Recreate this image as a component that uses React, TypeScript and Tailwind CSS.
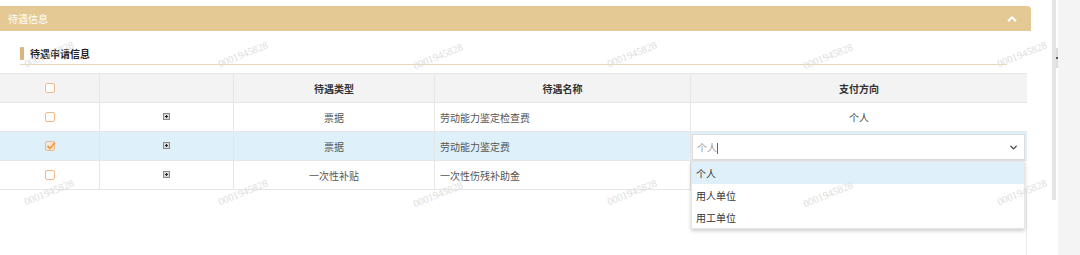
import { ChevronUp, ChevronDown } from 'lucide-react';

interface Row { type: string; name: string; pay: string; checked?: boolean; editing?: boolean }

const rows: Row[] = [
  { type: '票据', name: '劳动能力鉴定检查费', pay: '个人' },
  { type: '票据', name: '劳动能力鉴定费', pay: '个人', checked: true, editing: true },
  { type: '一次性补贴', name: '一次性伤残补助金', pay: '' },
];

const options = ['个人', '用人单位', '用工单位'];

const marks = [
  { x: 23, y: 60 }, { x: 217, y: 60 }, { x: 412, y: 62 }, { x: 606, y: 60 }, { x: 802, y: 62 }, { x: 996, y: 60 },
  { x: 23, y: 198 }, { x: 217, y: 198 }, { x: 412, y: 200 }, { x: 606, y: 198 }, { x: 802, y: 200 }, { x: 996, y: 198 },
];

function Check({ on }: { on?: boolean }){
  return (
    <span className={`relative inline-block w-[10px] h-[10px] rounded-[2px] border ${on ? 'border-[#f0b98a] bg-[#f7e7da]' : 'border-[#f4b888] bg-white'}`}>
      {on && (
        <svg className="absolute left-[0px] top-[-1px]" width="10" height="10" viewBox="0 0 10 10">
          <path d="M1.5 5 L4 7.5 L9 1.5" stroke="#ef9a45" strokeWidth="1.8" fill="none" />
        </svg>
      )}
    </span>
  );
}

function Expand(){
  return (
    <span className="relative inline-block w-[7px] h-[7px] border border-[#8a8a8a] bg-[#d9d9d9]">
      <span className="absolute left-[1px] top-[2px] w-[3px] h-px bg-[#222]" />
      <span className="absolute left-[2px] top-[1px] w-px h-[3px] bg-[#222]" />
    </span>
  );
}

const cell = 'h-[29px] flex items-center border-r border-b border-[#e6e6e6]';

export default function App(){
  return (
    <div className="flex h-[255px] overflow-hidden bg-white text-[10px] font-['Noto_Sans_CJK_SC','Noto_Sans',sans-serif]">
      <div className="relative w-[1052px] pt-[6px]">
        <div className="w-[1031px] h-[25px] bg-[#e4c995] rounded-tr-[4px] flex items-center justify-between pl-[8px] pr-[12px] text-white">
          <span>待遇信息</span>
          <ChevronUp size={14} strokeWidth={3.2} />
        </div>

        <div className="ml-[20px] w-[987px] mt-[15px] h-[19px] border-b border-[#ead7b3] flex items-start">
          <span className="w-[4px] h-[13px] mt-[1px] bg-[#d8b680] rounded-[1px]" />
          <span className="ml-[6px] font-bold text-[#222] leading-[15px]">待遇申请信息</span>
        </div>

        <div className="mt-[8px] w-[1027px] h-[200px] border-r border-[#ececec]">
          <div className="grid grid-cols-[100px_134px_201px_256px_336px] border-t border-[#e6e6e6]">
            <div className={`${cell} justify-center bg-[#f3f3f3]`}><Check /></div>
            <div className={`${cell} bg-[#f3f3f3]`} />
            <div className={`${cell} justify-center bg-[#f3f3f3] font-bold text-[#333]`}>待遇类型</div>
            <div className={`${cell} justify-center bg-[#f3f3f3] font-bold text-[#333]`}>待遇名称</div>
            <div className={`${cell} justify-center bg-[#f3f3f3] font-bold text-[#333] border-r-0`}>支付方向</div>

            {rows.map((r, i) => {
              const bg = r.checked ? 'bg-[#def0fa]' : 'bg-white';
              return [
                <div key={i + 'a'} className={`${cell} ${bg} justify-center`}><Check on={r.checked} /></div>,
                <div key={i + 'b'} className={`${cell} ${bg} justify-center pb-[2px]`}><Expand /></div>,
                <div key={i + 'c'} className={`${cell} ${bg} justify-center text-[#555]`}>{r.type}</div>,
                <div key={i + 'd'} className={`${cell} ${bg} pl-[5px] text-[#555]`}>{r.name}</div>,
                <div key={i + 'e'} className={`${cell} ${bg} justify-center text-[#444] border-r-0 relative`}>
                  {r.editing ? (
                    <>
                      <div className="absolute left-[1px] top-[2px] w-[333px] h-[26px] bg-white border border-[#dcdcdc] flex items-center justify-between pl-[4px] pr-[5px] text-[#999]">
                        <span>个人<span className="inline-block w-px h-[11px] bg-[#666] align-[-2px]" /></span>
                        <ChevronDown size={11} strokeWidth={3} className="text-[#444]" />
                      </div>
                      <div className="absolute left-0 top-[29px] z-10 w-[334px] bg-white shadow-[0_2px_4px_rgba(0,0,0,0.2)] border border-[#e6e6e6]">
                        {options.map((o, j) => (
                          <div key={o} className={`h-[22px] flex items-center pl-[4px] text-[#333] ${j === 0 ? 'bg-[#dff0fa]' : ''}`}>{o}</div>
                        ))}
                      </div>
                    </>
                  ) : r.pay}
                </div>,
              ];
            })}
          </div>
        </div>

        {marks.map((m, i) => (
          <span
            key={i}
            style={{ left: m.x, top: m.y }}
            className="absolute pointer-events-none -rotate-[22deg] origin-top-left leading-none text-[10.5px] text-[#dddddd] font-['Liberation_Serif',serif] z-20"
          >
            0001945828
          </span>
        ))}
      </div>

      <div className="relative w-[4px] bg-white">
        <div className="h-[200px] bg-[#e4e4e4]" />
      </div>
      <div className="relative w-[2px] bg-white">
        <div className="absolute top-[48px] left-0 w-[2px] h-[20px] bg-[#ddd]" />
        <div className="absolute top-[57px] left-0 w-[2px] h-[2px] bg-[#555]" />
      </div>
      <div className="flex-1 bg-[#f4f4f4]" />
    </div>
  );
}
